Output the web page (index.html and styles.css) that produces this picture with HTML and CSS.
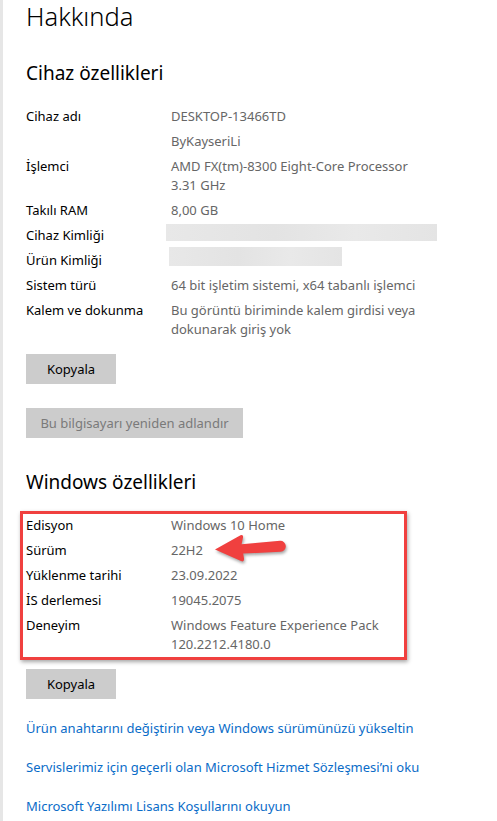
FILE: index.html
```html
<!DOCTYPE html>
<html lang="tr">
<head>
<meta charset="utf-8">
<title>Hakkında</title>
<link rel="stylesheet" href="styles.css">
</head>
<body>
<div class="page">
  <h1 class="title">Hakkında</h1>

  <h2 class="section-title first">Cihaz özellikleri</h2>
  <div class="specs">
    <div class="label">Cihaz adı</div><div class="value">DESKTOP-13466TD</div>
    <div class="label"></div><div class="value">ByKayseriLi</div>
    <div class="label">İşlemci</div><div class="value">AMD FX(tm)-8300 Eight-Core Processor 3.31 GHz</div>
    <div class="label">Takılı RAM</div><div class="value">8,00 GB</div>
    <div class="label">Cihaz Kimliği</div><div class="value"><span class="blur blur-long"></span></div>
    <div class="label">Ürün Kimliği</div><div class="value"><span class="blur blur-short"></span></div>
    <div class="label">Sistem türü</div><div class="value">64 bit işletim sistemi, x64 tabanlı işlemci</div>
    <div class="label">Kalem ve dokunma</div><div class="value">Bu görüntü biriminde kalem girdisi veya dokunarak giriş yok</div>
  </div>

  <button class="btn btn-copy">Kopyala</button>
  <button class="btn btn-rename" disabled>Bu bilgisayarı yeniden adlandır</button>

  <h2 class="section-title second">Windows özellikleri</h2>
  <div class="highlight">
    <div class="specs">
      <div class="label">Edisyon</div><div class="value">Windows 10 Home</div>
      <div class="label">Sürüm</div><div class="value">22H2</div>
      <div class="label">Yüklenme tarihi</div><div class="value">23.09.2022</div>
      <div class="label">İS derlemesi</div><div class="value">19045.2075</div>
      <div class="label">Deneyim</div><div class="value">Windows Feature Experience Pack 120.2212.4180.0</div>
    </div>
    <svg class="arrow" width="80" height="40" viewBox="0 0 80 40" aria-hidden="true">
      <path d="M5 19.5 L30.5 5.2 Q33.5 4 33 7.5 L31.6 14.2 L70 10.8 A5.5 5.5 0 0 1 70.6 21.8 L33.2 23.6 L34 28.6 Q34.4 32.4 31 31 Z" fill="#f0403f"/>
    </svg>
  </div>

  <button class="btn btn-copy btn-copy2">Kopyala</button>

  <div class="links">
    <a href="#">Ürün anahtarını değiştirin veya Windows sürümünüzü yükseltin</a>
    <a href="#">Servislerimiz için geçerli olan Microsoft Hizmet Sözleşmesi’ni oku</a>
    <a href="#">Microsoft Yazılımı Lisans Koşullarını okuyun</a>
  </div>
</div>
</body>
</html>
```

FILE: styles.css
```css
html, body {
  margin: 0;
  padding: 0;
  background: #ffffff;
}

.page {
  box-sizing: border-box;
  min-height: 821px;
  border-left: 3px solid #e6e6e6;
  padding: 0.4px 0 0 23px;
  font-family: "Noto Sans", "Open Sans", sans-serif;
  font-size: 13px;
  line-height: 19px;
  color: #000;
}

.title {
  margin: 0;
  font-size: 25.5px;
  line-height: 32px;
  font-weight: 300;
}

.section-title {
  margin: 0;
  font-size: 19px;
  line-height: 28px;
  font-weight: 400;
}

.section-title.first {
  margin-top: 27px;
}

.section-title.second {
  margin-top: 30.5px;
}

.specs {
  display: grid;
  grid-template-columns: 145px 252px;
  row-gap: 6px;
}

.section-title.first + .specs {
  margin-top: 19.8px;
}

.value {
  color: #666;
}

.blur {
  display: block;
  background: linear-gradient(90deg, #e8e8e8, #e3e3e3 40%, #e9e9e9 70%, #e4e4e4);
}

.blur-long {
  width: 271px;
  height: 17px;
  margin: -2px 0 0 -5px;
}

.blur-short {
  width: 173px;
  height: 19px;
  margin: -4px 0 0 -2px;
}

.btn {
  display: block;
  box-sizing: border-box;
  height: 30px;
  border: none;
  background: #cccccc;
  font-family: inherit;
  font-size: 13px;
  color: #000;
  padding: 0;
}

.btn-copy {
  width: 90px;
  margin-top: 14.5px;
}

.btn-rename {
  width: 217px;
  margin-top: 24px;
  color: #7a7a7a;
}

.highlight {
  position: relative;
  box-sizing: border-box;
  width: 387px;
  margin: 14.5px 0 0 -6px;
  padding: 2px 0 3px 3px;
  border: 3px solid #f0403f;
  box-shadow: 1px 2px 4px rgba(0, 0, 0, 0.35);
}

.arrow {
  position: absolute;
  left: 187px;
  top: 16.5px;
  filter: drop-shadow(1px 2px 1.5px rgba(0, 0, 0, 0.35));
}

.btn-copy2 {
  margin-top: 9px;
}

.links {
  display: flex;
  flex-direction: column;
  gap: 20px;
  margin-top: 20.5px;
}

.links a {
  color: #0a6cc8;
  text-decoration: none;
}
```
